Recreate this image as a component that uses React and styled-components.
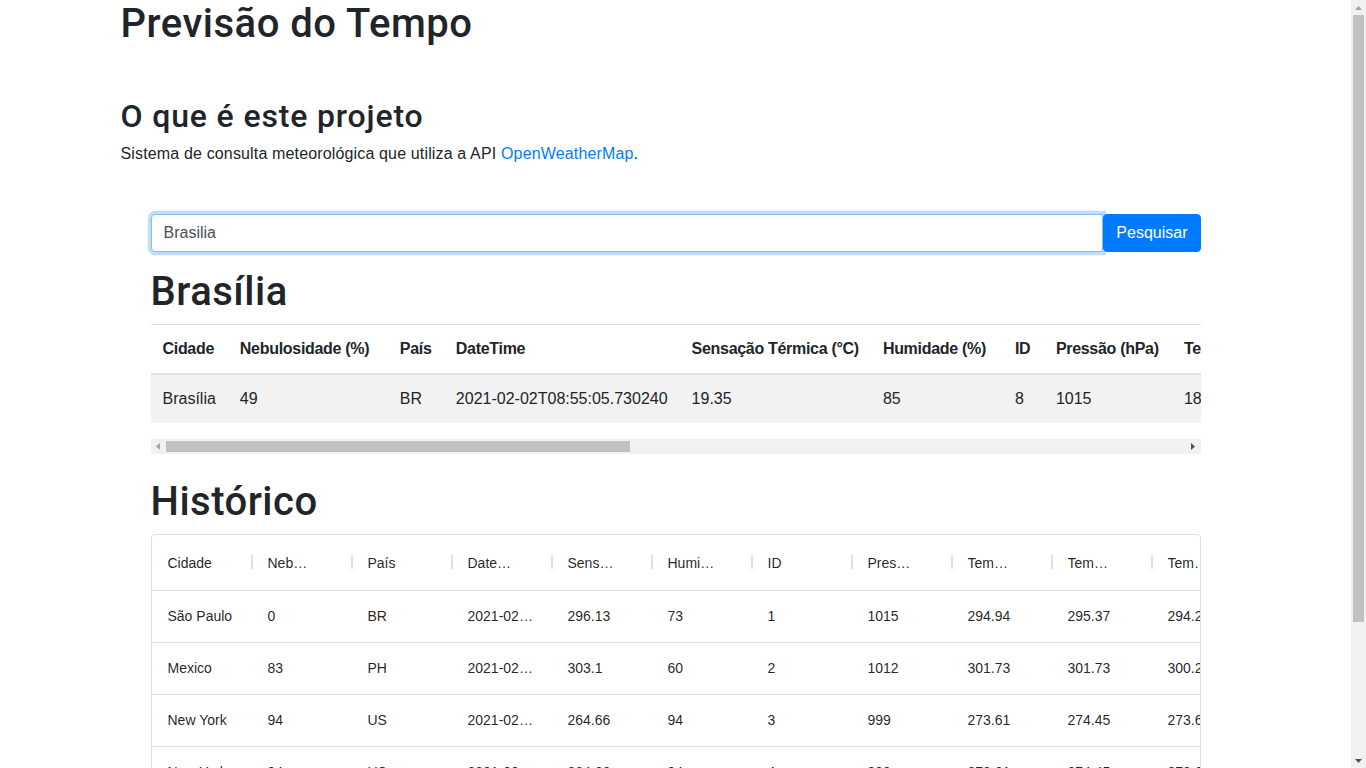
import React from 'react';
import styled, { createGlobalStyle } from 'styled-components';

const GlobalStyle = createGlobalStyle`
  *, *::before, *::after { box-sizing: border-box; }
  html, body { margin: 0; padding: 0; }
  body {
    font-family: "Liberation Sans", Arial, sans-serif;
    font-size: 16px;
    line-height: 1.5;
    color: #212529;
    background: #fff;
    padding-right: 15px;
  }
`;

/* ---------- scrollbars (classic style) ---------- */

const PageScrollbar = styled.div`
  position: fixed;
  top: 0;
  right: 0;
  width: 15px;
  height: 100vh;
  background: #f1f1f1;
  display: flex;
  flex-direction: column;
  z-index: 10;
`;

const HTrack = styled.div`
  display: flex;
  height: 15px;
  background: #f1f1f1;
`;

const ScrollButton = styled.div`
  flex: 0 0 15px;
  display: flex;
  align-items: center;
  justify-content: center;
`;

const VThumb = styled.div`
  flex: 0 0 ${p => p.$size}px;
  margin: 0 2px;
  background: #c1c1c1;
`;

const HThumb = styled.div`
  flex: 0 0 ${p => p.$size}px;
  margin: 2px 0;
  background: #c1c1c1;
`;

const TrackRest = styled.div`
  flex: 1;
`;

const Arrow = ({ dir, color }) => {
  const pts = {
    up: '0,4 3.5,0 7,4',
    down: '0,0 3.5,4 7,0',
    left: '4,0 0,3.5 4,7',
    right: '0,0 4,3.5 0,7',
  }[dir];
  const vertical = dir === 'up' || dir === 'down';
  return (
    <svg width={vertical ? 7 : 4} height={vertical ? 4 : 7} viewBox={vertical ? '0 0 7 4' : '0 0 4 7'}>
      <polygon points={pts} fill={color} />
    </svg>
  );
};

/* ---------- page ---------- */

const Container = styled.div`
  max-width: 1140px;
  margin: 0 auto;
  padding: 0 15px;
  display: flex;
  flex-direction: column;
`;

const Heading = styled.h1`
  font-family: Roboto, "Liberation Sans", sans-serif;
  font-weight: 500;
  font-size: 40px;
  line-height: 1.2;
  letter-spacing: 0.5px;
  color: #212529;
  margin: ${p => p.$mt || 0}px 0 8px;
`;

const SubHeading = styled.h2`
  font-family: Roboto, "Liberation Sans", sans-serif;
  font-weight: 500;
  font-size: 32px;
  line-height: 1.2;
  letter-spacing: 0.85px;
  color: #212529;
  margin: 41px 0 7px;
`;

const Lead = styled.p`
  margin: 0;
  letter-spacing: 0.15px;
`;

const Link = styled.a`
  color: #007bff;
  text-decoration: none;
`;

const Inner = styled.section`
  display: flex;
  flex-direction: column;
  padding: 0 30px;
  margin-top: 48px;
`;

const SearchRow = styled.form`
  display: flex;
  align-items: stretch;
  margin: 0;
`;

const SearchInput = styled.input`
  flex: 1;
  min-width: 0;
  height: 38px;
  padding: 6px 12px;
  font-family: "Liberation Sans", Arial, sans-serif;
  font-size: 16px;
  line-height: 1.5;
  color: #495057;
  background: #fff;
  border: 1px solid #80bdff;
  border-radius: 4px 0 0 4px;
  box-shadow: 0 0 0 3.2px rgba(0, 123, 255, 0.25);
  outline: none;
  caret-color: #212529;
`;

const SearchButton = styled.button`
  position: relative;
  z-index: 1;
  height: 38px;
  padding: 6px 12px;
  font-family: "Liberation Sans", Arial, sans-serif;
  font-size: 16px;
  line-height: 1.5;
  color: #fff;
  background: #007bff;
  border: 1px solid #007bff;
  border-radius: 4px;
  cursor: pointer;
`;

const TableWrap = styled.div`
  width: 100%;
  overflow-x: auto;
  scrollbar-width: none;
  &::-webkit-scrollbar { display: none; }
`;

const Table = styled.table`
  width: max-content;
  min-width: 100%;
  margin-bottom: 16px;
  border-collapse: collapse;
  color: #212529;
`;

const Th = styled.th`
  width: ${p => p.$w}px;
  padding: 12px;
  text-align: left;
  white-space: nowrap;
  font-weight: 700;
  letter-spacing: -0.3px;
  vertical-align: bottom;
  border-top: 1px solid #dee2e6;
  border-bottom: 2px solid #dee2e6;
`;

const Tr = styled.tr`
  &:nth-of-type(odd) { background: rgba(0, 0, 0, 0.05); }
`;

const Td = styled.td`
  padding: 12px;
  white-space: nowrap;
  vertical-align: top;
  border-top: 1px solid #dee2e6;
`;

const Grid = styled.div`
  height: 400px;
  border: 1px solid #e0e0e0;
  border-radius: 4px;
  overflow: hidden;
  font-family: "Liberation Sans", Helvetica, Arial, sans-serif;
  font-size: 14px;
  line-height: 1.43;
  color: rgba(0, 0, 0, 0.87);
`;

const GridHeader = styled.div`
  display: flex;
  height: 56px;
  border-bottom: 1px solid #e0e0e0;
`;

const HeaderCell = styled.div`
  position: relative;
  flex: 0 0 100px;
  display: flex;
  align-items: center;
  padding: 0 16px;
  &::after {
    content: "";
    position: absolute;
    right: -1px;
    top: 20px;
    width: 2px;
    height: 14px;
    background: #e0e0e0;
  }
`;

const HeaderTitle = styled.span`
  display: block;
  max-width: 47px;
  overflow: hidden;
  text-overflow: ellipsis;
  white-space: nowrap;
  font-weight: 500;
`;

const GridRow = styled.div`
  display: flex;
  height: 52px;
  border-bottom: 1px solid #e0e0e0;
`;

const GridCell = styled.div`
  flex: 0 0 100px;
  padding: 0 16px;
  line-height: 51px;
  overflow: hidden;
  text-overflow: ellipsis;
  white-space: nowrap;
`;

const currentCols = [
  ['Cidade', 77],
  ['Nebulosidade (%)', 160],
  ['País', 56],
  ['DateTime', 235],
  ['Sensação Térmica (°C)', 190],
  ['Humidade (%)', 132],
  ['ID', 41],
  ['Pressão (hPa)', 128],
  ['Temperatura (°C)', 150],
  ['Temperatura Máxima (°C)', 215],
  ['Temperatura Mínima (°C)', 210],
  ['Visibilidade (m)', 150],
  ['Velocidade do Vento (m/s)', 230],
  ['Direção do Vento (°)', 184],
  ['Descrição', 150],
];

const currentRow = [
  'Brasília', '49', 'BR', '2021-02-02T08:55:05.730240', '19.35', '85', '8', '1015',
  '18.52', '19.00', '18.00', '10000', '2.06', '130', 'nuvens dispersas',
];

const histCols = [
  'Cidade', 'Nebulosidade (%)', 'País', 'DateTime', 'Sensação Térmica', 'Humidade (%)',
  'ID', 'Pressão (hPa)', 'Temperatura', 'Temperatura Máxima', 'Temperatura Mínima',
  'Visibilidade', 'Vento', 'Descrição',
];

const histRows = [
  ['São Paulo', '0', 'BR', '2021-02-02T08:41:12.120321', '296.13', '73', '1', '1015', '294.94', '295.37', '294.26', '10000', '3.6', 'céu limpo'],
  ['Mexico', '83', 'PH', '2021-02-02T08:42:30.541120', '303.1', '60', '2', '1012', '301.73', '301.73', '300.22', '10000', '4.1', 'nublado'],
  ['New York', '94', 'US', '2021-02-02T08:43:05.330245', '264.66', '94', '3', '999', '273.61', '274.45', '273.65', '8000', '6.2', 'neve'],
  ['New York', '94', 'US', '2021-02-02T08:44:18.902145', '264.66', '94', '4', '999', '273.61', '274.45', '273.65', '8000', '6.2', 'neve'],
  ['Brasília', '49', 'BR', '2021-02-02T08:55:05.730240', '292.5', '85', '5', '1015', '291.67', '292.15', '291.15', '10000', '2.06', 'nuvens'],
  ['Lisboa', '20', 'PT', '2021-02-02T08:56:40.112233', '285.2', '70', '6', '1020', '286.1', '287.04', '285.37', '10000', '5.1', 'céu limpo'],
];

export default function App() {
  return (
    <>
      <GlobalStyle />
      <PageScrollbar aria-hidden="true">
        <ScrollButton><Arrow dir="up" color="#a3a3a3" /></ScrollButton>
        <VThumb $size={607} />
        <TrackRest />
        <ScrollButton><Arrow dir="down" color="#505050" /></ScrollButton>
      </PageScrollbar>

      <Container>
        <Heading>Previsão do Tempo</Heading>
        <SubHeading>O que é este projeto</SubHeading>
        <Lead>
          Sistema de consulta meteorológica que utiliza a API{' '}
          <Link href="#">OpenWeatherMap</Link>.
        </Lead>

        <Inner>
          <SearchRow onSubmit={e => e.preventDefault()}>
            <SearchInput type="text" defaultValue="Brasilia" autoFocus />
            <SearchButton type="submit">Pesquisar</SearchButton>
          </SearchRow>

          <Heading $mt={16}>Brasília</Heading>
          <TableWrap>
            <Table>
              <thead>
                <tr>
                  {currentCols.map(([label, w]) => (
                    <Th key={label} $w={w}>{label}</Th>
                  ))}
                </tr>
              </thead>
              <tbody>
                <Tr>
                  {currentRow.map((v, i) => (
                    <Td key={i}>{v}</Td>
                  ))}
                </Tr>
              </tbody>
            </Table>
          </TableWrap>
          <HTrack aria-hidden="true">
            <ScrollButton><Arrow dir="left" color="#a3a3a3" /></ScrollButton>
            <HThumb $size={464} />
            <TrackRest />
            <ScrollButton><Arrow dir="right" color="#505050" /></ScrollButton>
          </HTrack>

          <Heading $mt={24}>Histórico</Heading>
          <Grid>
            <GridHeader>
              {histCols.map(c => (
                <HeaderCell key={c}>
                  <HeaderTitle>{c}</HeaderTitle>
                </HeaderCell>
              ))}
            </GridHeader>
            {histRows.map((r, i) => (
              <GridRow key={i}>
                {r.map((v, j) => (
                  <GridCell key={j}>{v}</GridCell>
                ))}
              </GridRow>
            ))}
          </Grid>
        </Inner>
      </Container>
    </>
  );
}
